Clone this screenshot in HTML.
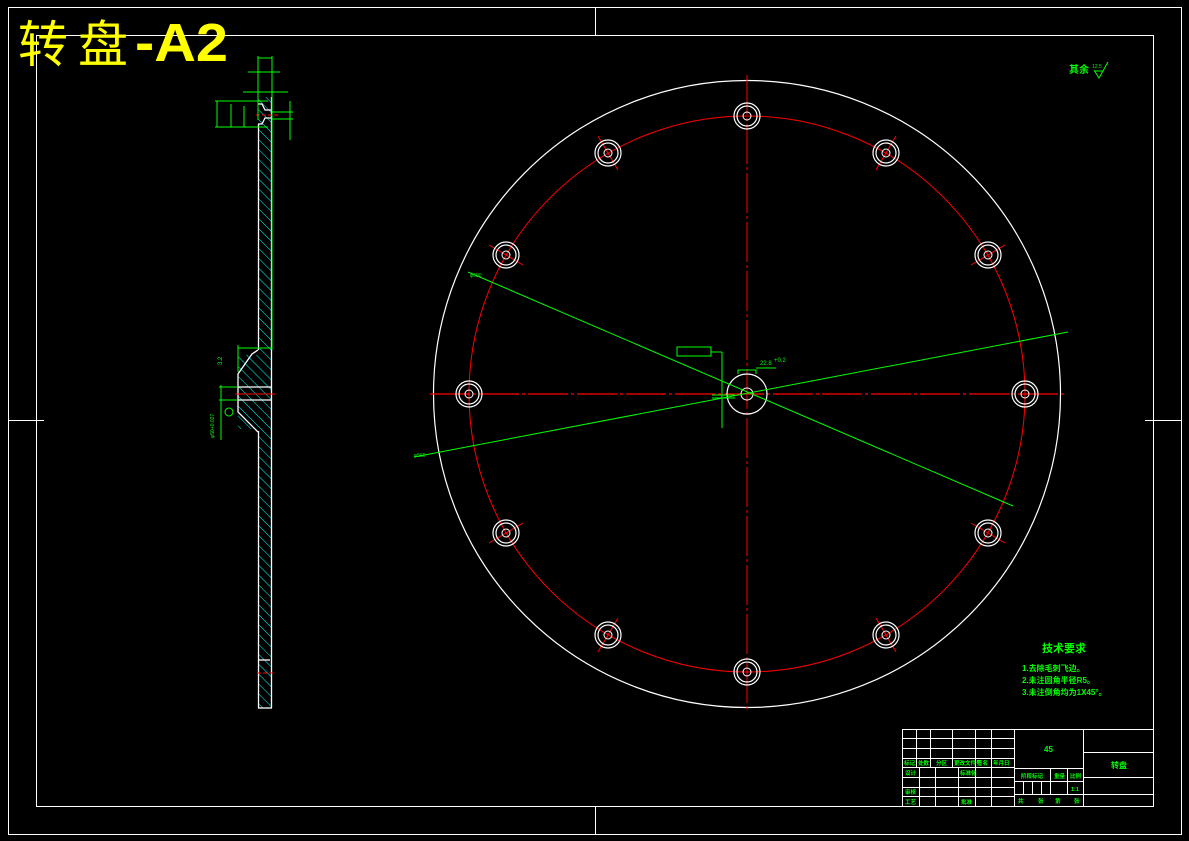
<!DOCTYPE html>
<html><head><meta charset="utf-8"><style>
html,body{margin:0;padding:0;background:#000;width:1189px;height:841px;overflow:hidden}
svg{display:block}
.g{fill:#00ff00;font-family:"Liberation Sans","Noto Sans CJK SC",sans-serif}
</style></head><body>
<svg width="1189" height="841" viewBox="0 0 1189 841" xmlns="http://www.w3.org/2000/svg">
<defs>
<pattern id="h" width="7" height="7" patternUnits="userSpaceOnUse" patternTransform="rotate(-45)">
<line x1="0" y1="0" x2="0" y2="7" stroke="#00ffff" stroke-width="1"/>
</pattern>
<g id="hole">
<circle r="13" fill="none" stroke="#fff" stroke-width="1.2"/>
<circle r="10" fill="none" stroke="#fff" stroke-width="1.2"/>
<circle r="4" fill="none" stroke="#fff" stroke-width="1"/>
</g>
</defs>
<rect x="8.5" y="7.5" width="1173" height="827" fill="none" stroke="#fff" stroke-width="1"/>
<rect x="36.5" y="35.5" width="1117" height="771" fill="none" stroke="#fff" stroke-width="1"/>
<g stroke="#fff" stroke-width="1">
<line x1="595.5" y1="7" x2="595.5" y2="35"/><line x1="595.5" y1="806" x2="595.5" y2="834"/>
<line x1="8" y1="420.5" x2="44" y2="420.5"/><line x1="1145" y1="420.5" x2="1181" y2="420.5"/>
</g>
<text x="18" y="62" font-family="'Liberation Sans','Noto Sans CJK SC',sans-serif" font-size="50" fill="#ffff00" textLength="110" lengthAdjust="spacing">转盘</text>
<text x="135" y="61" font-family="'Liberation Sans',sans-serif" font-size="54" font-weight="bold" fill="#ffff00" textLength="93" lengthAdjust="spacingAndGlyphs">-A2</text>

<circle cx="747" cy="394" r="313.5" fill="none" stroke="#fff" stroke-width="1.2"/>
<circle cx="747" cy="394" r="278" fill="none" stroke="#ff0000" stroke-width="1"/>
<line x1="430" y1="394" x2="1066" y2="394" stroke="#ff0000" stroke-width="1.2" stroke-dasharray="40 3 3 3"/>
<line x1="747" y1="75" x2="747" y2="712" stroke="#ff0000" stroke-width="1" stroke-dasharray="40 3 3 3"/>
<g stroke="#ff0000" stroke-width="1">
<line x1="876" y1="170" x2="896" y2="136"/><line x1="618" y1="170" x2="598" y2="136"/>
<line x1="489" y1="245" x2="523" y2="265"/><line x1="1005" y1="245" x2="971" y2="265"/>
<line x1="489" y1="543" x2="523" y2="523"/><line x1="1005" y1="543" x2="971" y2="523"/>
<line x1="618" y1="618" x2="598" y2="652"/><line x1="876" y1="618" x2="896" y2="652"/>
</g>
<circle cx="747" cy="394" r="20" fill="none" stroke="#fff" stroke-width="1.2"/>
<circle cx="747" cy="394" r="6" fill="none" stroke="#fff" stroke-width="1"/>
<use href="#hole" x="1025" y="394"/><use href="#hole" x="988" y="255"/><use href="#hole" x="886" y="153"/>
<use href="#hole" x="747" y="116"/><use href="#hole" x="608" y="153"/><use href="#hole" x="506" y="255"/>
<use href="#hole" x="469" y="394"/><use href="#hole" x="506" y="533"/><use href="#hole" x="608" y="635"/>
<use href="#hole" x="747" y="672"/><use href="#hole" x="886" y="635"/><use href="#hole" x="988" y="533"/>
<g stroke="#00ff00" stroke-width="1" fill="none">
<line x1="468" y1="272" x2="1013" y2="506"/>
<line x1="414" y1="457" x2="1068" y2="332"/>
<polyline points="722,352 722,400"/>
<rect x="677" y="347" width="34" height="9"/>
<line x1="711" y1="352" x2="722" y2="352"/>
<polyline points="738,374 738,370 756,370 756,374"/>
<line x1="756" y1="368" x2="776" y2="368"/>
<line x1="712" y1="395" x2="735" y2="395"/><line x1="712" y1="398" x2="735" y2="398"/>
<line x1="722" y1="400" x2="722" y2="428"/>
</g>
<text class="g" x="760" y="365" font-size="6">22.8</text>
<text class="g" x="774" y="362" font-size="6">+0.2</text>
<text class="g" x="470" y="277" font-size="5">φ600</text>
<text class="g" x="414" y="457" font-size="5">φ560</text>
<text class="g" x="1069" y="73" font-size="10" font-weight="bold">其余</text>
<text class="g" x="1092" y="68" font-size="5">12.5</text>
<path d="M1094 70 L1099 78 L1108 62 M1095 71 L1103 71" stroke="#00ff00" fill="none" stroke-width="1"/>

<rect x="258" y="97" width="14" height="611" fill="url(#h)"/>
<rect x="238" y="355" width="20" height="74" fill="url(#h)"/>
<g stroke="#fff" stroke-width="1.3" fill="none">
<line x1="258.5" y1="124" x2="258.5" y2="350"/>
<line x1="271.5" y1="97" x2="271.5" y2="708"/>
<line x1="258.5" y1="431" x2="258.5" y2="708"/>
<line x1="258" y1="708" x2="272" y2="708"/>
<polyline points="258,350 252,354 238,374 238,412 258,432"/>
<line x1="238" y1="387" x2="272" y2="387"/><line x1="238" y1="400" x2="272" y2="400"/>
<polyline points="258,104 262,104 265,110 271,110"/>
<polyline points="258,124 262,124 265,118 271,118"/>
<polyline points="259,660 270,660 M262,660 262,684 M259,684 270,684"/>
</g>
<g stroke="#ff0000" stroke-width="1"><line x1="256" y1="115" x2="278" y2="115" stroke-dasharray="4 2"/><line x1="235" y1="394" x2="275" y2="394"/><line x1="257" y1="673" x2="275" y2="673" stroke-dasharray="4 2"/></g>
<g stroke="#00ff00" stroke-width="1" fill="none">
<line x1="258" y1="56" x2="258" y2="120"/><line x1="272" y1="56" x2="272" y2="350"/>
<line x1="258" y1="58" x2="272" y2="58"/><line x1="248" y1="72" x2="280" y2="72"/>
<line x1="243" y1="92" x2="288" y2="92"/>
<line x1="215" y1="101" x2="268" y2="101"/><line x1="215" y1="127" x2="268" y2="127"/>
<line x1="217" y1="101" x2="217" y2="127"/><line x1="231" y1="104" x2="231" y2="127"/><line x1="244" y1="106" x2="244" y2="127"/>
<line x1="272" y1="112" x2="293" y2="112"/><line x1="272" y1="119" x2="293" y2="119"/><line x1="290" y1="101" x2="290" y2="140"/>
<line x1="238" y1="348" x2="272" y2="348"/><line x1="238" y1="345" x2="238" y2="372"/>
<line x1="219" y1="387" x2="238" y2="387"/><line x1="219" y1="400" x2="238" y2="400"/><line x1="221" y1="385" x2="221" y2="440"/>
<circle cx="229" cy="412" r="4"/>
</g>
<text class="g" x="222" y="365" font-size="6" transform="rotate(-90 222 365)">3.2</text>
<text class="g" x="214" y="438" font-size="5" transform="rotate(-90 214 438)">φ50+0.027</text>

<text class="g" x="1042" y="652" font-size="11" font-weight="bold">技术要求</text>
<text class="g" x="1022" y="671" font-size="8" font-weight="bold">1.去除毛刺飞边。</text>
<text class="g" x="1022" y="683" font-size="8" font-weight="bold">2.未注圆角半径R5。</text>
<text class="g" x="1022" y="695" font-size="8" font-weight="bold">3.未注倒角均为1X45°。</text>

<g stroke="#fff" stroke-width="1" fill="none">
<rect x="902.5" y="729.5" width="251" height="77"/>
<line x1="1014.5" y1="729" x2="1014.5" y2="806"/>
<line x1="1083.5" y1="729" x2="1083.5" y2="806"/>
<line x1="902" y1="738.5" x2="1014" y2="738.5"/><line x1="902" y1="748.5" x2="1014" y2="748.5"/>
<line x1="902" y1="758.5" x2="1014" y2="758.5"/><line x1="902" y1="767.5" x2="1014" y2="767.5"/>
<line x1="902" y1="777.5" x2="1014" y2="777.5"/><line x1="902" y1="787.5" x2="1014" y2="787.5"/><line x1="902" y1="796.5" x2="1014" y2="796.5"/>
<line x1="916.5" y1="729" x2="916.5" y2="767"/><line x1="930.5" y1="729" x2="930.5" y2="767"/>
<line x1="952.5" y1="729" x2="952.5" y2="767"/><line x1="975.5" y1="729" x2="975.5" y2="806"/><line x1="991.5" y1="729" x2="991.5" y2="806"/>
<line x1="919.5" y1="767" x2="919.5" y2="806"/><line x1="935.5" y1="767" x2="935.5" y2="806"/><line x1="958.5" y1="767" x2="958.5" y2="806"/>
<line x1="1014" y1="768.5" x2="1083" y2="768.5"/><line x1="1014" y1="781.5" x2="1083" y2="781.5"/><line x1="1014" y1="794.5" x2="1083" y2="794.5"/>
<line x1="1050.5" y1="768" x2="1050.5" y2="794"/><line x1="1067.5" y1="768" x2="1067.5" y2="794"/>
<line x1="1023.5" y1="781" x2="1023.5" y2="794"/><line x1="1032.5" y1="781" x2="1032.5" y2="794"/><line x1="1041.5" y1="781" x2="1041.5" y2="794"/>
<line x1="1083" y1="752.5" x2="1153" y2="752.5"/><line x1="1083" y1="777.5" x2="1153" y2="777.5"/><line x1="1083" y1="794.5" x2="1153" y2="794.5"/>
</g>
<g class="g" font-size="5.5" font-weight="bold">
<text x="904" y="765">标记</text><text x="918" y="765">处数</text><text x="936" y="765">分区</text><text x="954" y="765">更改文件号</text><text x="977" y="765">签名</text><text x="993" y="765">年月日</text>
<text x="905" y="775">设计</text><text x="960" y="775">标准化</text><text x="905" y="794">审核</text><text x="905" y="804">工艺</text><text x="961" y="804">批准</text>
<text x="1044" y="752" font-size="8">45</text>
<text x="1021" y="778">阶段标记</text><text x="1054" y="778">重量</text><text x="1070" y="778">比例</text>
<text x="1071" y="791">1:1</text>
<text x="1018" y="803">共</text><text x="1038" y="803">张</text><text x="1055" y="803">第</text><text x="1074" y="803">张</text>
<text x="1111" y="768" font-size="8">转盘</text>
</g>
</svg>
</body></html>
